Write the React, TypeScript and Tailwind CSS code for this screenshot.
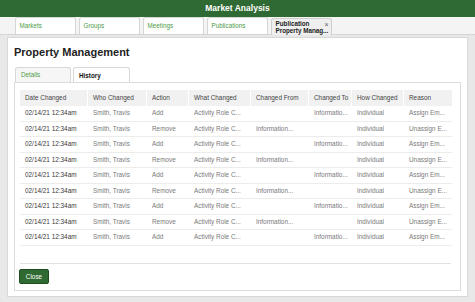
const topTabs = ['Markets', 'Groups', 'Meetings', 'Publications'];

const columns = [
  { label: 'Date Changed', w: 'w-[68px]' },
  { label: 'Who Changed', w: 'w-[59px]' },
  { label: 'Action', w: 'w-[42px]' },
  { label: 'What Changed', w: 'w-[62px]' },
  { label: 'Changed From', w: 'w-[58px]' },
  { label: 'Changed To', w: 'w-[43px]' },
  { label: 'How Changed', w: 'w-[52px]' },
  { label: 'Reason', w: 'w-[48px]' },
];

const addRow = ['02/14/21 12:34am', 'Smith, Travis', 'Add', 'Activity Role C...', '', 'Informatio...', 'Individual', 'Assign Em...'];
const removeRow = ['02/14/21 12:34am', 'Smith, Travis', 'Remove', 'Activity Role C...', 'Information...', '', 'Individual', 'Unassign E...'];

const rows = Array.from({ length: 9 }, (_, i) => (i % 2 === 0 ? addRow : removeRow));

const App = () => {
  return (
    <div className="h-[302px] w-[475px] overflow-hidden bg-[#e8e8e8] font-['Liberation_Sans',Arial,sans-serif]">
      {/* title bar */}
      <header className="flex h-[17px] items-center justify-center bg-[#2f6a34] text-[8.5px] font-bold text-white">
        Market Analysis
      </header>

      {/* workspace tabs */}
      <div className="flex h-[18px] items-end gap-[2.5px] border-b border-[#d4d4d4] bg-[#f4f4f4] pl-[14.5px]">
        {topTabs.map(tab => (
          <div
            key={tab}
            className="flex h-[17px] w-[61.5px] items-center rounded-t-[3px] border border-b-0 border-[#d6d6d6] bg-white pl-[4px] text-[6.3px] text-[#4d9a45]"
          >
            {tab}
          </div>
        ))}
        <div className="relative -mb-[1px] flex h-[17px] w-[61px] flex-col justify-center rounded-t-[3px] border border-b-0 border-[#cfcfcf] bg-[#efefef] pl-[4px] text-[6.3px] font-bold leading-[7px] text-[#222]">
          <span>Publication</span>
          <span>Property Manag...</span>
          <span className="absolute right-[2px] top-[1.5px] text-[7px] font-normal text-[#555]">×</span>
        </div>
      </div>

      {/* page body */}
      <div className="flex h-[267px] pl-[7px] pt-[2px]">
        <div className="flex h-[260px] w-[461px] flex-col border border-[#d8d8d8] bg-white px-[6px] pb-[5px]">
          <h1 className="mt-[9px] text-[11px] font-bold leading-[11px] text-[#222]">Property Management</h1>

          <div className="mt-[9px] flex gap-[2px] pl-[1px]">
            <div className="flex h-[15px] w-[56px] items-center rounded-t-[3px] border border-b-0 border-[#d8d8d8] bg-[#f6f6f6] pl-[5px] text-[6.3px] text-[#4d9a45]">
              Details
            </div>
            <div className="-mb-[1px] flex h-[16px] w-[57px] items-center rounded-t-[3px] border border-b-0 border-[#d8d8d8] bg-white pl-[5px] text-[6.3px] font-bold text-[#111]">
              History
            </div>
          </div>

          <div className="flex flex-1 flex-col border border-[#dcdcdc] pl-[5px] pr-[8px] pt-[7px]">
            <div className="flex h-[16px] bg-[#f1f1f1]">
              {columns.map(col => (
                <div
                  key={col.label}
                  className={`${col.w} flex items-center border-r border-white pl-[5px] text-[6.4px] text-[#444] last:border-r-0`}
                >
                  {col.label}
                </div>
              ))}
            </div>
            {rows.map((row, i) => (
              <div key={i} className="flex h-[15.5px] border-b border-[#ececec]">
                {row.map((cell, j) => (
                  <div
                    key={j}
                    className={`${columns[j].w} flex items-center whitespace-nowrap pl-[5px] text-[6.4px] ${j === 0 ? 'text-[#3a3a3a]' : 'text-[#7a7a7a]'}`}
                  >
                    {cell}
                  </div>
                ))}
              </div>
            ))}

            <div className="mt-auto border-t border-[#e2e2e2] pb-[6px] pt-[5px] mr-[1px]">
              <button
                type="button"
                className="-ml-[1px] flex h-[15px] w-[30px] items-center justify-center rounded-[2px] border border-[#1f4d22] bg-[#2f6a33] text-[6.4px] text-white"
              >
                Close
              </button>
            </div>
          </div>
        </div>
      </div>
    </div>
  );
};

export default App;
